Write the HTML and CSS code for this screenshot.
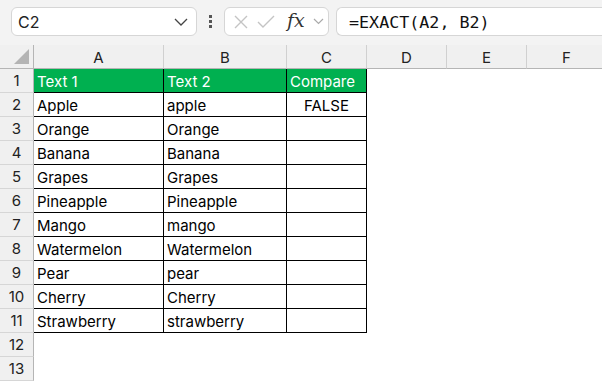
FILE: index.html
```html
<!DOCTYPE html>
<html lang="en">
  <head>
    <meta charset="UTF-8" />
    <meta name="viewport" content="width=device-width, initial-scale=1.0" />
    <title>EXACT</title>
    <link rel="stylesheet" href="styles.css">
  </head>

  <body>
    <div class="toolbar">
      <div class="name-box">
        <span>C2</span>
        <svg class="chevron" width="14" height="8" viewBox="0 0 14 8"><path d="M1 1 L7 7 L13 1" fill="none" stroke="#444" stroke-width="1.3"/></svg>
      </div>
      <div class="dots"><i></i><i></i><i></i></div>
      <div class="fx-box">
        <svg width="16" height="16" viewBox="0 0 16 16"><path d="M2 2 L14 14 M14 2 L2 14" stroke="#c4c4c4" stroke-width="1.4" fill="none"/></svg>
        <svg width="18" height="14" viewBox="0 0 18 14"><path d="M1 7 L6 12 L17 1" stroke="#c4c4c4" stroke-width="1.4" fill="none"/></svg>
        <span class="fx">fx</span>
        <svg width="11" height="7" viewBox="0 0 11 7"><path d="M1 1 L5.5 5.5 L10 1" fill="none" stroke="#aaa" stroke-width="1.2"/></svg>
      </div>
      <div class="formula">=EXACT(A2, B2)</div>
    </div>

    <div class="sheet">
      <div class="corner"><span class="triangle"></span></div>
      <div class="col-head">A</div>
      <div class="col-head">B</div>
      <div class="col-head">C</div>
      <div class="col-head">D</div>
      <div class="col-head">E</div>
      <div class="col-head">F</div>
    </div>

    <script>
      const rows = [
        ["Text 1", "Text 2", "Compare"],
        ["Apple", "apple", "FALSE"],
        ["Orange", "Orange", ""],
        ["Banana", "Banana", ""],
        ["Grapes", "Grapes", ""],
        ["Pineapple", "Pineapple", ""],
        ["Mango", "mango", ""],
        ["Watermelon", "Watermelon", ""],
        ["Pear", "pear", ""],
        ["Cherry", "Cherry", ""],
        ["Strawberry", "strawberry", ""],
      ];

      const sheet = document.querySelector(".sheet");

      for (let r = 0; r < 13; r++) {
        let head = document.createElement("div");
        head.className = "row-head";
        head.innerText = r + 1;
        sheet.appendChild(head);

        for (let c = 0; c < 6; c++) {
          let cell = document.createElement("div");
          cell.className = "cell";
          if (r < rows.length && c < 3) {
            cell.classList.add("boxed");
            cell.innerText = rows[r][c];
            if (r === 0) cell.classList.add("title");
            if (r > 0 && c === 2) cell.classList.add("center");
          }
          sheet.appendChild(cell);
        }
      }
    </script>
  </body>
</html>
```

FILE: styles.css
```css
body {
  margin: 0;
  font-family: "Inter", "Liberation Sans", sans-serif;
  background: #ffffff;
  color: #000;
  overflow: hidden;
}

.toolbar {
  height: 45px;
  background: #f3f3f3;
  display: flex;
  align-items: flex-start;
  padding-top: 7px;
  box-sizing: border-box;
}

.name-box {
  margin-left: 11px;
  width: 186px;
  height: 29px;
  box-sizing: border-box;
  background: #fff;
  border: 1px solid #d6d6d6;
  border-radius: 6px;
  display: flex;
  align-items: center;
  justify-content: space-between;
  padding: 0 8px 0 6px;
  font-size: 16px;
  color: #222;
}

.dots {
  width: 27px;
  height: 29px;
  display: flex;
  flex-direction: column;
  align-items: center;
  justify-content: center;
  gap: 2px;
}

.dots i {
  display: block;
  width: 3px;
  height: 3px;
  background: #555;
}

.fx-box {
  width: 105px;
  height: 29px;
  box-sizing: border-box;
  background: #fff;
  border: 1px solid #d6d6d6;
  border-radius: 6px;
  display: flex;
  align-items: center;
  padding: 0 4px 0 8px;
  gap: 8px;
}

.fx-box .fx {
  font-family: "DejaVu Serif", "Liberation Serif", serif;
  font-style: italic;
  font-size: 19px;
  color: #333;
  margin-left: 4px;
  line-height: 1;
  margin-top: -3px;
}

.formula {
  margin-left: 7px;
  flex: 1;
  height: 29px;
  box-sizing: border-box;
  background: #fff;
  border: 1px solid #d6d6d6;
  border-right: none;
  border-radius: 6px 0 0 6px;
  display: flex;
  align-items: center;
  padding-left: 12px;
  font-family: "DejaVu Sans Mono", "Liberation Mono", monospace;
  font-size: 16.7px;
  color: #111;
}

.sheet {
  display: grid;
  grid-template-columns: 34px 130px 123px 80px 80px 80px 80px;
  grid-auto-rows: 24px;
  grid-template-rows: 24px;
}

.corner {
  background: #f0f0f0;
  border-right: 1px solid #b5b5b5;
  border-bottom: 1px solid #b5b5b5;
  box-sizing: border-box;
  position: relative;
}

.triangle {
  position: absolute;
  right: 4px;
  bottom: 4px;
  width: 0;
  height: 0;
  border-left: 15px solid transparent;
  border-bottom: 15px solid #b4b4b4;
}

.col-head {
  background: #f0f0f0;
  border-right: 1px solid #d0d0d0;
  border-bottom: 1px solid #b5b5b5;
  box-sizing: border-box;
  display: flex;
  align-items: center;
  justify-content: center;
  font-size: 15px;
  color: #222;
  padding-top: 2px;
}

.row-head {
  background: #f0f0f0;
  border-right: 1px solid #b5b5b5;
  border-bottom: 1px solid #d6d6d6;
  box-sizing: border-box;
  display: flex;
  align-items: center;
  justify-content: center;
  font-size: 15px;
  color: #222;
}

.cell {
  box-sizing: border-box;
  font-size: 15px;
  display: flex;
  align-items: center;
  padding: 1px 3px 0;
  white-space: nowrap;
}

.cell.boxed {
  border-right: 1px solid #000;
  border-bottom: 1px solid #000;
}

.cell.title {
  background: #00b050;
  color: #fff;
}

.cell.center {
  justify-content: center;
}
```
